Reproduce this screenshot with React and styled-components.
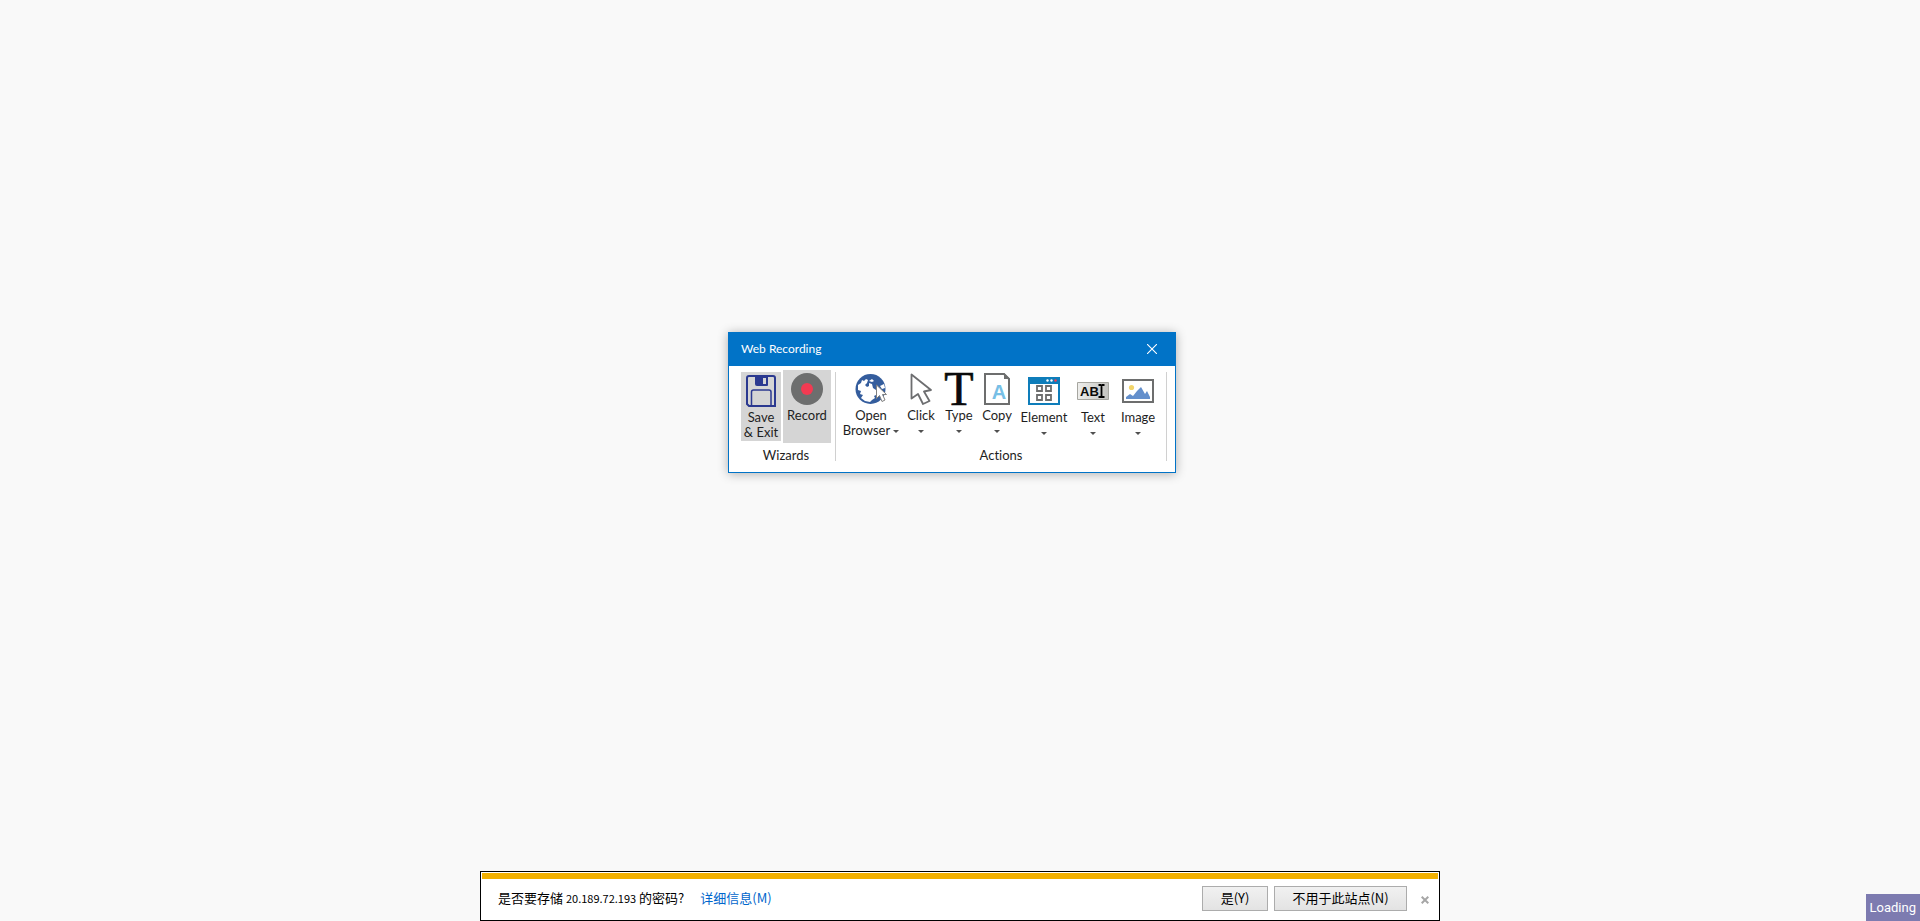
import React from 'react';
import styled, { createGlobalStyle } from 'styled-components';

const GlobalStyle = createGlobalStyle`
  *, *::before, *::after { box-sizing: border-box; }
  body {
    margin: 0;
    background: #f9f9f9;
    color: #1e1e1e;
    font-family: Lato, "Noto Sans CJK SC", sans-serif;
    font-variant-ligatures: none;
  }
  button { font: inherit; color: inherit; }
`;

const Desktop = styled.main`
  position: relative;
  min-height: 100vh;
  display: flex;
  flex-direction: column;
  justify-content: flex-end;
  align-items: center;
`;

const Window = styled.section`
  position: absolute;
  top: 332px;
  left: calc(50% - 232px);
  border: 1px solid #0173c7;
  background: #fff;
  box-shadow: 0 1px 10px rgba(0, 0, 0, 0.3);
`;

const TitleBar = styled.header`
  display: flex;
  align-items: center;
  justify-content: space-between;
  height: 33px;
  padding: 0 11px 2px 12px;
  background: #0173c7;
  color: #fff;
`;

const Title = styled.h1`
  margin: 0;
  font-size: 12px;
  line-height: 16px;
  font-weight: 400;
`;

const CloseWindow = styled.button`
  display: flex;
  align-items: center;
  justify-content: center;
  width: 24px;
  height: 24px;
  padding: 0;
  border: 0;
  background: none;
  color: #fff;
`;

const Ribbon = styled.div`
  display: flex;
  align-items: flex-start;
  padding: 4px 8px 9px;
`;

const Group = styled.div`
  display: flex;
  flex-direction: column;
  align-items: center;
  padding: 0 4px;
`;

const Tools = styled.div`
  display: flex;
  align-items: flex-start;
  gap: ${(p) => p.$gap || 0}px;
  height: 77px;
`;

const GroupName = styled.div`
  font-size: 13px;
  line-height: 16px;
`;

const Divider = styled.div`
  width: 1px;
  height: 89px;
  margin-top: 2px;
  background: #d0d0d0;
`;

const Tool = styled.button`
  display: flex;
  flex-direction: column;
  align-items: center;
  width: ${(p) => p.$width}px;
  height: ${(p) => (p.$low ? 69 : 73)}px;
  margin-top: ${(p) => (p.$low ? 2 : 0)}px;
  padding: 3px 0 0;
  border: 0;
  background: ${(p) => (p.$active ? '#d5d5d5' : 'transparent')};
  font-size: 13px;
  line-height: 15px;
  white-space: nowrap;
`;

const IconBox = styled.span`
  display: flex;
  align-items: center;
  justify-content: center;
  height: 32px;
  margin-bottom: 3px;
`;

const Line = styled.span`
  display: flex;
  align-items: center;
  gap: 3px;
  height: 15px;
`;

const Caret = styled.span`
  width: 6px;
  margin-top: 1px;
  border: 3px solid transparent;
  border-top-color: #505050;
  border-bottom: 0;
`;

const Notice = styled.section`
  width: 50%;
  padding: 1px;
  border: 1px solid #000;
  background: #fff;
  color: #000;
  font-family: "Noto Sans CJK SC", sans-serif;
  font-size: 13px;
  line-height: 20px;
`;

const Stripe = styled.div`
  height: 6px;
  background: #f2b000;
`;

const NoticeRow = styled.div`
  display: flex;
  align-items: center;
  height: 40px;
  padding: 0 1px 2px 16px;
`;

const Address = styled.span`
  font-size: 11px;
`;

const Details = styled.a`
  margin: 0 auto 0 16px;
  color: #0066cc;
  text-decoration: none;
`;

const Choice = styled.button`
  width: ${(p) => p.$width}px;
  height: 25px;
  margin-right: 6px;
  padding: 0;
  border: 1px solid #acacac;
  background: linear-gradient(#f1f1f1, #e3e3e3);
`;

const Dismiss = styled.button`
  display: flex;
  align-items: center;
  justify-content: center;
  width: 24px;
  height: 24px;
  padding: 3px 0 0;
  border: 0;
  background: none;
`;

const Loading = styled.div`
  position: fixed;
  right: 0;
  bottom: 0;
  padding: 4px;
  background: #7d7bb0;
  color: #fff;
  font-family: Roboto, sans-serif;
  font-size: 13px;
  line-height: 19px;
`;

const SaveIcon = () => (
  <svg width="30" height="32" viewBox="0 0 30 32" fill="none" stroke="#2b3990" strokeWidth="2">
    <path d="M3 1H27Q29 1 29 3V31H3L1 29V3Q1 1 3 1Z" />
    <path d="M5.500 31V17Q5.500 15 7.500 15H23Q25 15 25 17V31" strokeWidth="1.500" />
    <path d="M9 1H22V10Q22 11 21 11H11Q9 11 9 9Z" fill="#2b3990" stroke="none" />
    <path d="M17 3H20V9H17Z" fill="#d5d5d5" stroke="none" />
  </svg>
);

const RecordIcon = () => (
  <svg width="32" height="32" viewBox="0 0 32 32">
    <circle cx="16" cy="16" r="16" fill="#6d6e6e" />
    <circle cx="16" cy="16" r="6" fill="#f23a52" />
  </svg>
);

const GlobeIcon = () => (
  <svg width="32" height="32" viewBox="0 0 32 32">
    <circle cx="15.500" cy="16" r="15" fill="#345d9d" />
    <path
      d="M3 12L6 10L7 7L9 8L11 6L13 7L12 10L10 12L12 14L14 13L14 10L17 11L18 15L21 17L21 22L19 23L20 25L17 27L15 29L10 28L6 25L8 22L5 21L6 18L3 17Z"
      fill="#fff"
    />
    <path d="M14 8L17 6L19 8L17 9Z" fill="#fff" />
    <path d="M25 13L29 11L30 15L27 16Z" fill="#fff" />
    <path
      d="M21.500 12V25.500L24.500 22.500L27 28.500L30 27L27.500 21.500H31.500Z"
      fill="#fff"
      stroke="#808080"
      strokeWidth="1"
    />
  </svg>
);

const CursorIcon = () => (
  <svg width="22" height="32" viewBox="0 0 22 32">
    <path
      d="M1.500 1.500V25.500L8 21L13 31L19.500 28L14 18.500L21 17Z"
      fill="#fff"
      stroke="#6d6e70"
      strokeWidth="1.800"
      strokeLinejoin="round"
    />
  </svg>
);

const TypeIcon = () => (
  <svg width="30" height="32" viewBox="0 0 30 32" overflow="visible">
    <text
      x="15"
      y="32"
      textAnchor="middle"
      fontFamily="Liberation Serif, serif"
      fontSize="48"
      fill="#0a0a0a"
      stroke="#0a0a0a"
      strokeWidth="0.600"
    >
      T
    </text>
  </svg>
);

const CopyIcon = () => (
  <svg width="26" height="32" viewBox="0 0 26 32">
    <path d="M1 1H20L25 6V31H1Z" fill="#fff" stroke="#6d6e6e" strokeWidth="2" />
    <path d="M20 0V6H26Z" fill="#6d6e6e" />
    <text
      x="15"
      y="26"
      textAnchor="middle"
      fontFamily="Liberation Sans, sans-serif"
      fontWeight="700"
      fontSize="20"
      fill="#77bfe6"
    >
      A
    </text>
  </svg>
);

const ElementIcon = () => (
  <svg width="32" height="28" viewBox="0 0 32 28">
    <path d="M0 0H32V28H0Z" fill="#0e7dba" />
    <path d="M2 7H30V26H2Z" fill="#fff" />
    <circle cx="19.500" cy="3.500" r="1.200" fill="#fff" />
    <circle cx="23.500" cy="3.500" r="1.200" fill="#fff" />
    <circle cx="27.500" cy="3.500" r="1.300" fill="#f23a52" />
    <g fill="none" stroke="#6d6e6e" strokeWidth="1.800">
      <path d="M9 9H14V14H9Z" />
      <path d="M18 9H23V14H18Z" />
      <path d="M9 18H14V23H9Z" />
      <path d="M18 18H23V23H18Z" />
    </g>
  </svg>
);

const TextIcon = () => (
  <svg width="32" height="18" viewBox="0 0 32 18">
    <defs>
      <linearGradient id="field" x1="0" x2="1" y1="0" y2="0">
        <stop offset="0" stopColor="#eeeeec" />
        <stop offset="1" stopColor="#c4c4c0" />
      </linearGradient>
    </defs>
    <path d="M.5 .5H31.500V17.500H.5Z" fill="url(#field)" stroke="#a6a6a0" />
    <text
      x="3"
      y="14"
      fontFamily="Liberation Sans, sans-serif"
      fontWeight="700"
      fontSize="13"
      fill="#0a0a0a"
    >
      AB
    </text>
    <path d="M21.500 3H23.500L24.500 4L25.500 3H27.500M24.500 3V15M21.500 15H23.500L24.500 14L25.500 15H27.500" fill="none" stroke="#000" strokeWidth="1.800" />
  </svg>
);

const ImageIcon = () => (
  <svg width="32" height="24" viewBox="0 0 32 24">
    <path d="M1 1H31V23H1Z" fill="#fff" stroke="#6d6e6e" strokeWidth="2" />
    <circle cx="9.500" cy="8.500" r="2.600" fill="#f2d56b" />
    <path d="M4 20V18L8 15L11 17L15 12L19 8L23 15L25 12L28 18V20Z" fill="#638fcc" />
  </svg>
);

const actions = [
  { label: 'Click', width: 38, icon: <CursorIcon /> },
  { label: 'Type', width: 38, icon: <TypeIcon /> },
  { label: 'Copy', width: 38, icon: <CopyIcon /> },
  { label: 'Element', width: 56, icon: <ElementIcon />, low: true },
  { label: 'Text', width: 42, icon: <TextIcon />, low: true },
  { label: 'Image', width: 48, icon: <ImageIcon />, low: true },
];

export default function App() {
  return (
    <Desktop>
      <GlobalStyle />
      <Window aria-label="Web Recording">
        <TitleBar>
          <Title>Web Recording</Title>
          <CloseWindow aria-label="Close">
            <svg width="10" height="10" viewBox="0 0 10 10" stroke="#fff" strokeWidth="1.100">
              <path d="M0 0L10 10M10 0L0 10" />
            </svg>
          </CloseWindow>
        </TitleBar>
        <Ribbon>
          <Group>
            <Tools $gap={2}>
              <Tool $width={40} $low $active>
                <IconBox><SaveIcon /></IconBox>
                <Line>Save</Line>
                <Line>&amp; Exit</Line>
              </Tool>
              <Tool $width={48} $active>
                <IconBox><RecordIcon /></IconBox>
                <Line>Record</Line>
              </Tool>
            </Tools>
            <GroupName>Wizards</GroupName>
          </Group>
          <Divider />
          <Group>
            <Tools>
              <Tool $width={62}>
                <IconBox><GlobeIcon /></IconBox>
                <Line>Open</Line>
                <Line>Browser<Caret /></Line>
              </Tool>
              {actions.map((a) => (
                <Tool key={a.label} $width={a.width} $low={a.low}>
                  <IconBox>{a.icon}</IconBox>
                  <Line>{a.label}</Line>
                  <Line><Caret /></Line>
                </Tool>
              ))}
            </Tools>
            <GroupName>Actions</GroupName>
          </Group>
          <Divider />
        </Ribbon>
      </Window>
      <Notice>
        <Stripe />
        <NoticeRow>
          <span>是否要存储 <Address>20.189.72.193</Address> 的密码?</span>
          <Details href="#details">详细信息(M)</Details>
          <Choice $width={66}>是(Y)</Choice>
          <Choice $width={133}>不用于此站点(N)</Choice>
          <Dismiss aria-label="Dismiss">
            <svg width="8" height="8" viewBox="0 0 8 8" stroke="#a6a6a6" strokeWidth="2">
              <path d="M.7 .7L7.300 7.300M7.300 .7L.7 7.300" />
            </svg>
          </Dismiss>
        </NoticeRow>
      </Notice>
      <Loading>Loading</Loading>
    </Desktop>
  );
}
